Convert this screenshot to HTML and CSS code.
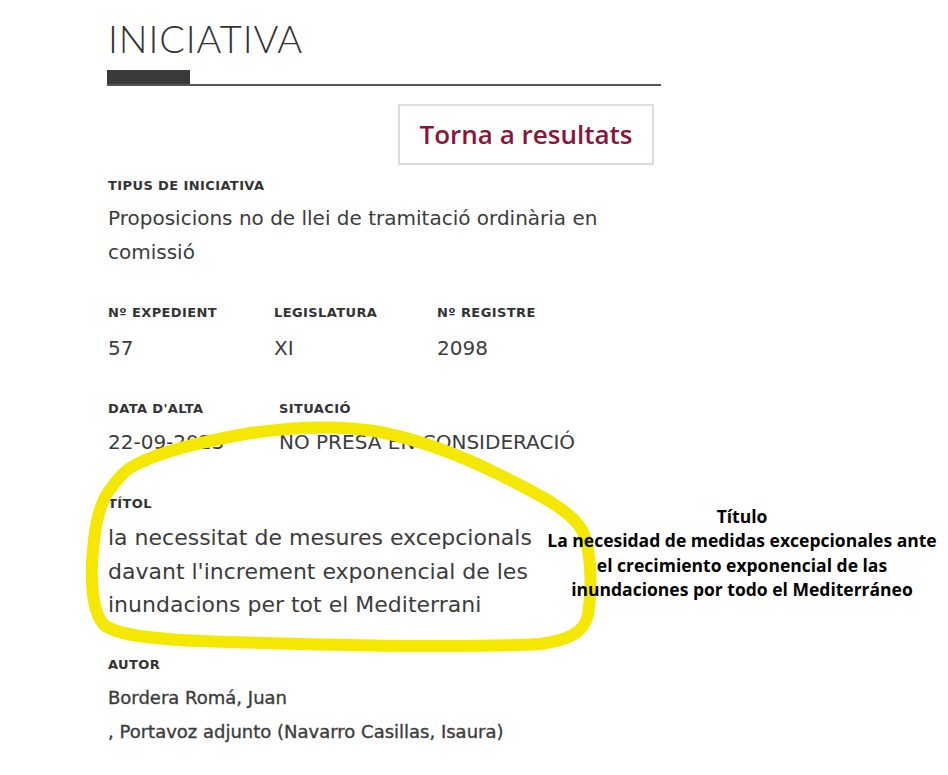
FILE: index.html
```html
<!DOCTYPE html>
<html lang="ca">
<head>
<meta charset="utf-8">
<title>Iniciativa</title>
<link rel="stylesheet" href="styles.css">
</head>
<body>
<div class="page">
  <main class="detail">
    <h1 class="title">INICIATIVA</h1>
    <div class="rule"><span class="rule-bar"></span></div>
    <div class="actions"><a class="back" href="#">Torna a resultats</a></div>

    <section class="field field-type">
      <div class="label">TIPUS DE INICIATIVA</div>
      <div class="value">Proposicions no de llei de tramitació ordinària en comissió</div>
    </section>

    <div class="row row-3">
      <section class="field">
        <div class="label">Nº EXPEDIENT</div>
        <div class="value">57</div>
      </section>
      <section class="field">
        <div class="label">LEGISLATURA</div>
        <div class="value">XI</div>
      </section>
      <section class="field">
        <div class="label">Nº REGISTRE</div>
        <div class="value">2098</div>
      </section>
    </div>

    <div class="row row-2">
      <section class="field">
        <div class="label">DATA D'ALTA</div>
        <div class="value">22-09-2023</div>
      </section>
      <section class="field">
        <div class="label">SITUACIÓ</div>
        <div class="value">NO PRESA EN CONSIDERACIÓ</div>
      </section>
    </div>

    <section class="field field-title">
      <div class="label">TÍTOL</div>
      <div class="value value-big">la necessitat de mesures excepcionals davant l'increment exponencial de les inundacions per tot el Mediterrani</div>
    </section>

    <section class="field field-author">
      <div class="label">AUTOR</div>
      <div class="value value-med">Bordera Romá, Juan</div>
      <div class="value value-med">, Portavoz adjunto (Navarro Casillas, Isaura)</div>
    </section>
  </main>

  <svg class="marker" width="948" height="775" viewBox="0 0 948 775" aria-hidden="true">
    <path d="M135 465 C160 452 200 442 245 434 C290 427 340 425 380 432 C420 440 460 455 500 475 C540 495 570 510 582 530 C592 550 592 590 588 615 C584 632 570 640 540 644 C470 648 320 645 200 641 C150 639 118 635 104 625 C92 612 90 580 93 550 C95 525 100 500 112 487 C118 478 125 470 135 465"
      fill="none" stroke="#f4e800" stroke-width="12" stroke-linecap="round" stroke-linejoin="round"/>
  </svg>

  <aside class="note">Título<br>La necesidad de medidas excepcionales ante el crecimiento exponencial de las inundaciones por todo el Mediterráneo</aside>
</div>
</body>
</html>
```
FILE: styles.css
```css
html, body {
  margin: 0;
  padding: 0;
  background: #ffffff;
}
body {
  font-family: "DejaVu Sans", sans-serif;
  color: #3a3a3a;
}
.page {
  position: relative;
  width: 948px;
  height: 775px;
  overflow: hidden;
}
.detail {
  width: 553px;
  padding: 16px 0 0 108px;
}
.title {
  margin: 0;
  font-family: "Lato", sans-serif;
  font-weight: 300;
  font-size: 38px;
  line-height: 44px;
  letter-spacing: 0.9px;
  color: #333333;
}
.rule {
  margin-top: 10px;
  margin-left: -1px;
  height: 14px;
  display: flex;
  align-items: flex-end;
  border-bottom: 2px solid #555555;
}
.rule-bar {
  width: 83px;
  height: 14px;
  background: #3a3a3a;
}
.actions {
  display: flex;
  justify-content: flex-end;
  margin-top: 18px;
  padding-right: 7px;
}
.back {
  display: block;
  width: 252px;
  height: 57px;
  border: 2px solid #dcdcdc;
  text-align: center;
  line-height: 57px;
  font-family: "Open Sans", sans-serif;
  font-size: 26px;
  font-weight: 600;
  color: #8a1538;
  text-decoration: none;
}
.label {
  font-size: 13px;
  font-weight: bold;
  letter-spacing: 0.4px;
  color: #333333;
  line-height: 18px;
}
.value {
  font-size: 20px;
  line-height: 34px;
  color: #3c3c3c;
  margin-top: 6px;
}
.field-type {
  margin-top: 12px;
}
.row {
  display: grid;
  margin-top: 35px;
}
.row-3 {
  grid-template-columns: 166px 163px 1fr;
}
.row-3 .value {
  margin-top: 9px;
}
.row-2 {
  grid-template-columns: 171px 1fr;
}
.row-2 .value {
  margin-top: 7px;
}
.field-title {
  margin-top: 36px;
}
.value-big {
  font-size: 22px;
  line-height: 33.5px;
  margin-top: 8px;
  width: 445px;
}
.field-author {
  margin-top: 34px;
}
.value-med {
  font-size: 18px;
  -webkit-text-stroke: 0.35px #3c3c3c;
  margin-top: 0;
}
.field-author .label + .value-med {
  margin-top: 7px;
}
.marker {
  position: absolute;
  left: 0;
  top: 0;
  z-index: 1;
  pointer-events: none;
}
.note {
  position: absolute;
  z-index: 2;
  left: 542px;
  top: 504px;
  width: 400px;
  text-align: center;
  font-family: "Open Sans", sans-serif;
  font-weight: 700;
  font-size: 17.5px;
  line-height: 24.3px;
  color: #000000;
}
```
